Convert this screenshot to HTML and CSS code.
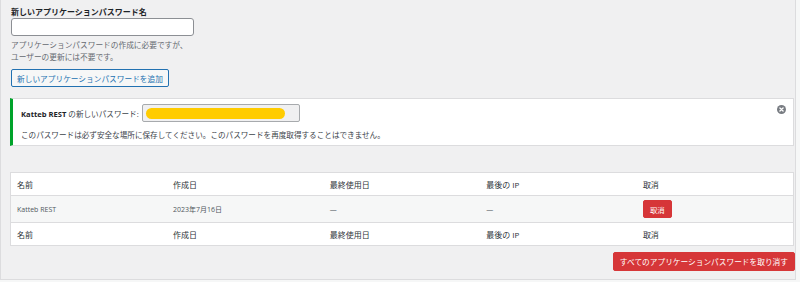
FILE: index.html
```html
<!DOCTYPE html>
<html lang="ja">
<head>
    <meta charset="UTF-8">
    <title>アプリケーションパスワード</title>
    <link rel="stylesheet" href="styles.css">
</head>
<body>
    <div class="frame">
        <div class="new-pass">
            <label class="field-label" for="new-name">新しいアプリケーションパスワード名</label>
            <input type="text" id="new-name" class="name-input">
            <p class="description">アプリケーションパスワードの作成に必要ですが、<br>ユーザーの更新には不要です。</p>
            <button class="btn-secondary">新しいアプリケーションパスワードを追加</button>
        </div>

        <div class="notice">
            <div class="notice-row">
                <span class="notice-label"><strong>Katteb REST</strong> の新しいパスワード:</span>
                <span class="pass-box"><span class="redact"></span></span>
            </div>
            <p class="notice-text">このパスワードは必ず安全な場所に保存してください。このパスワードを再度取得することはできません。</p>
            <button class="dismiss" aria-label="閉じる">
                <svg width="9" height="9" viewBox="0 0 20 20">
                    <circle cx="10" cy="10" r="10" fill="#787c82"/>
                    <path d="M6.5 6.5 L13.5 13.5 M13.5 6.5 L6.5 13.5" stroke="#fff" stroke-width="3" stroke-linecap="round"/>
                </svg>
            </button>
        </div>

        <table class="pass-table">
            <thead>
                <tr><th>名前</th><th>作成日</th><th>最終使用日</th><th>最後の IP</th><th>取消</th></tr>
            </thead>
            <tbody>
                <tr>
                    <td>Katteb REST</td>
                    <td>2023年7月16日</td>
                    <td>—</td>
                    <td>—</td>
                    <td><button class="btn-delete">取消</button></td>
                </tr>
            </tbody>
            <tfoot>
                <tr><th>名前</th><th>作成日</th><th>最終使用日</th><th>最後の IP</th><th>取消</th></tr>
            </tfoot>
        </table>

        <div class="revoke-all">
            <button class="btn-delete btn-all">すべてのアプリケーションパスワードを取り消す</button>
        </div>
    </div>
</body>
</html>
```

FILE: styles.css
```css
body {
    margin: 0;
    background: #f6f7f7;
    font-family: "Open Sans", "Noto Sans CJK JP", sans-serif;
    color: #1d2327;
}
.frame {
    width: 796px;
    height: 280px;
    background: #f0f0f1;
    border: 1px solid #dcdcde;
    border-top: none;
    padding: 6px 6px 0 9px;
    box-sizing: border-box;
}
.new-pass {
    padding-left: 1px;
}
.field-label {
    display: block;
    font-size: 8px;
    font-weight: 700;
    line-height: 12px;
}
.name-input {
    display: block;
    width: 183px;
    height: 18px;
    margin: 0;
    box-sizing: border-box;
    border: 1px solid #8c8f94;
    border-radius: 3px;
    background: #fff;
}
.description {
    margin: 3px 0 0;
    font-size: 7.7px;
    line-height: 12px;
    color: #646970;
}
.btn-secondary {
    display: block;
    margin-top: 6px;
    height: 18px;
    padding: 0 5px;
    font-family: inherit;
    font-size: 7.7px;
    color: #2271b1;
    background: #f6f7f7;
    border: 1px solid #2271b1;
    border-radius: 2px;
}
.notice {
    position: relative;
    margin-top: 11px;
    width: 784px;
    height: 48px;
    box-sizing: border-box;
    background: #fff;
    border: 1px solid #dcdcde;
    border-left: 3px solid #00a32a;
    padding: 5px 0 0 8px;
}
.notice-row {
    display: flex;
    align-items: center;
    gap: 3px;
    font-size: 7.6px;
    color: #3c434a;
}
.notice-row strong {
    color: #1d2327;
}
.pass-box {
    display: flex;
    align-items: center;
    width: 158px;
    height: 18px;
    box-sizing: border-box;
    padding: 0 3px;
    background: #f0f0f1;
    border: 1px solid #a7aaad;
    border-radius: 2px;
}
.redact {
    display: block;
    width: 139px;
    height: 11px;
    border-radius: 6px;
    background: #ffcc00;
}
.notice-text {
    margin: 7px 0 0;
    font-size: 7.6px;
    line-height: 12px;
    color: #3c434a;
}
.dismiss {
    position: absolute;
    top: 6px;
    right: 7px;
    padding: 0;
    border: none;
    background: none;
    line-height: 0;
}
.pass-table {
    margin-top: 26px;
    width: 784px;
    border-collapse: collapse;
    background: #fff;
    border: 1px solid #dcdcde;
    table-layout: fixed;
}
.pass-table th,
.pass-table td {
    text-align: left;
    font-weight: 400;
    padding: 0 6px;
}
.pass-table th {
    height: 22px;
    font-size: 8px;
    color: #2c3338;
}
.pass-table tbody td {
    height: 26px;
    font-size: 7px;
    color: #50575e;
    background: #f6f7f7;
    border-top: 1px solid #dcdcde;
    border-bottom: 1px solid #dcdcde;
}
.btn-delete {
    font-family: inherit;
    color: #fff;
    background: #d63638;
    border: 1px solid #d63638;
    border-radius: 2px;
    font-size: 7.4px;
    height: 18px;
    padding: 0 6px;
}
.revoke-all {
    display: flex;
    justify-content: flex-end;
    margin-top: 6px;
    width: 785px;
}
.btn-all {
    height: 19px;
    font-size: 7.7px;
    padding: 0 6px;
}
```
